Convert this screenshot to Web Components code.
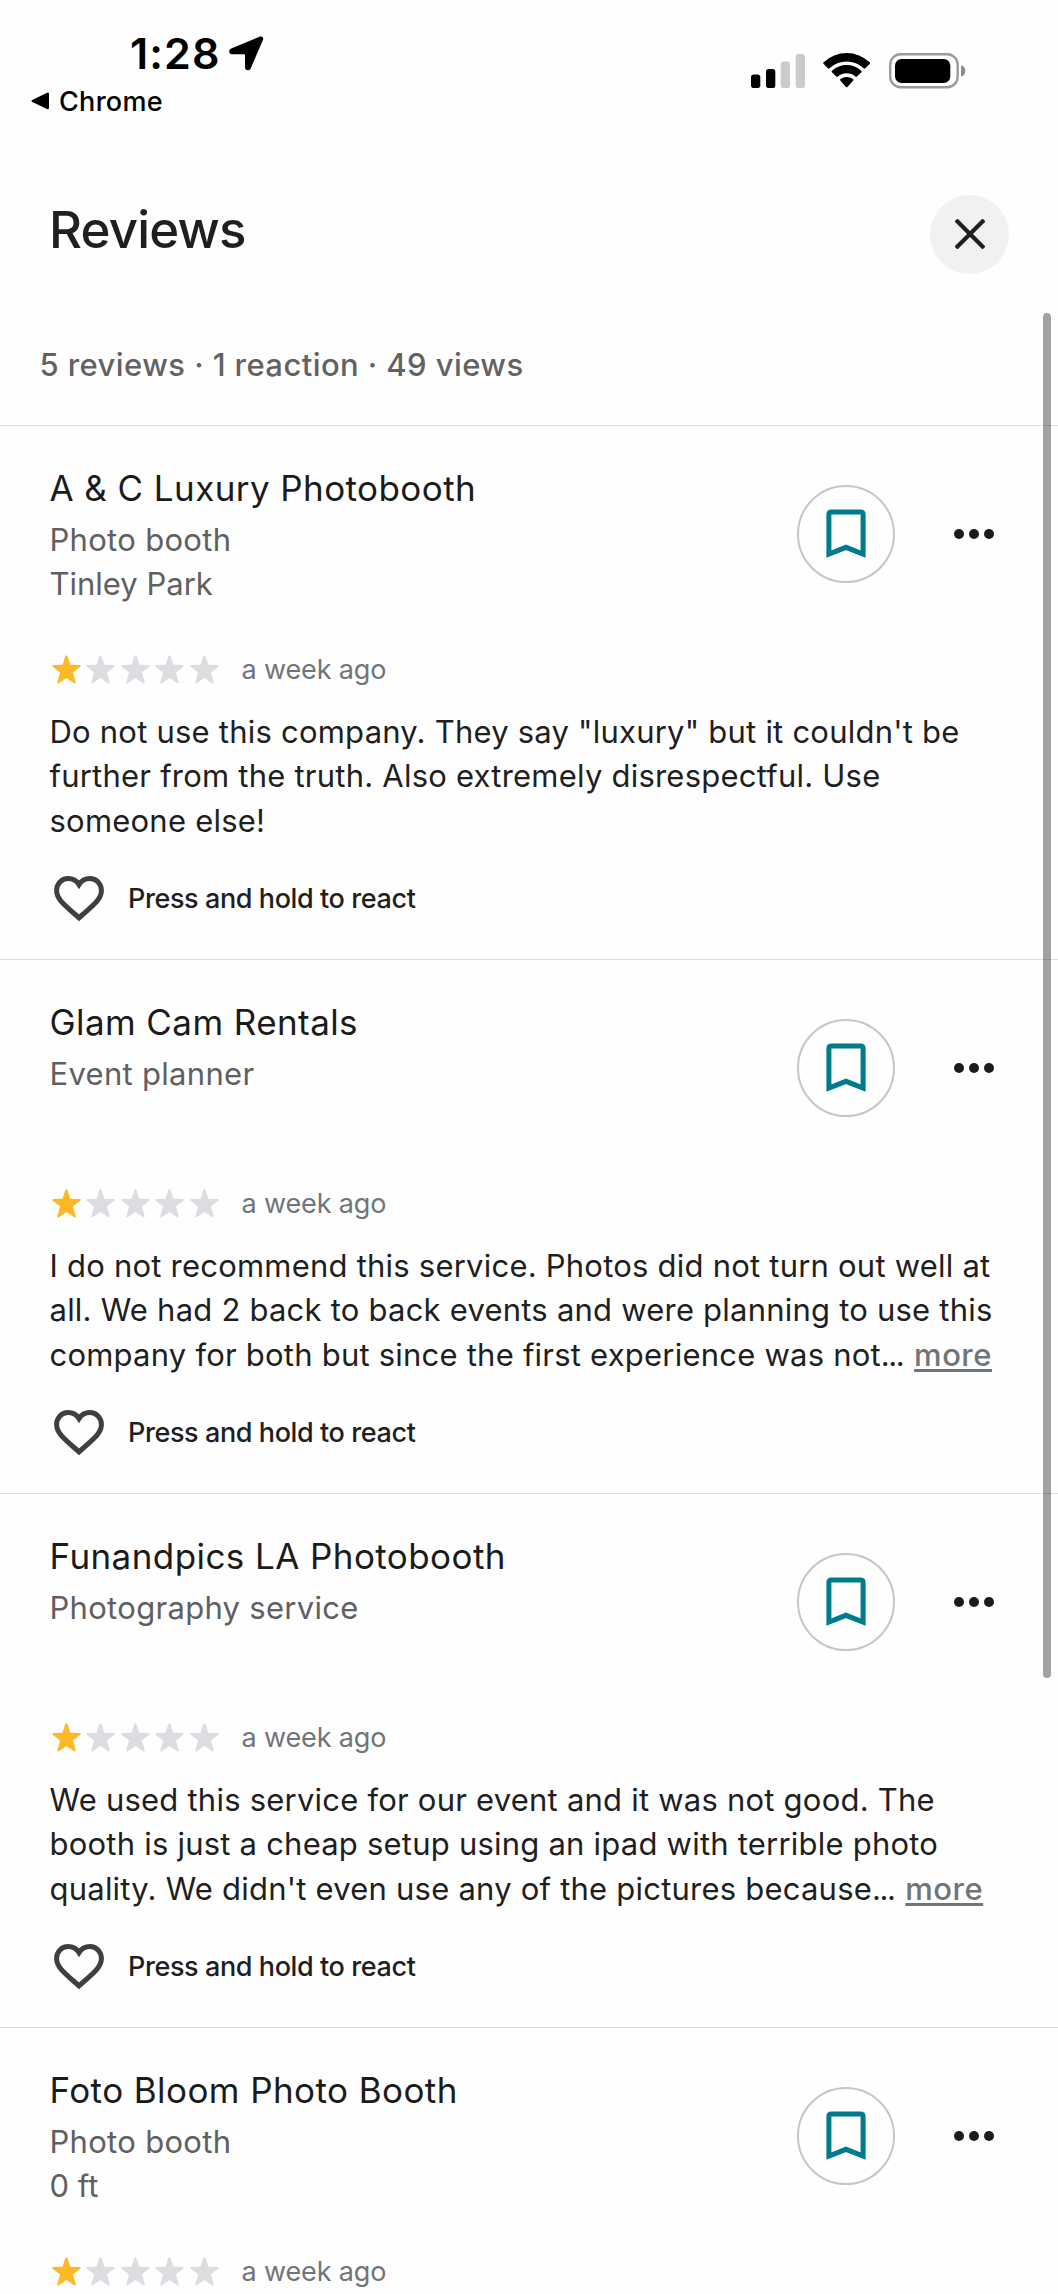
<!DOCTYPE html>
<html lang="en">
<head>
<meta charset="utf-8">
<title>Reviews</title>
<style>
  html, body { margin: 0; background: #fefefe; }
  body { width: 1058px; height: 2294px; overflow: hidden; font-family: Inter, "Noto Sans", sans-serif; color: #1f1f1f; }
  .dots { letter-spacing: -1.500px; }
</style>
</head>
<body>
<reviews-screen>
  <status-bar slot="status" time="1:28" back="Chrome"></status-bar>
  <sheet-header slot="header">Reviews</sheet-header>
  <review-summary slot="summary">5 reviews · 1 reaction · 49 views</review-summary>
  <review-card name="A &amp; C Luxury Photobooth" category="Photo booth" place="Tinley Park" when="a week ago" rating="1">Do not use this company. They say "luxury" but it couldn't be<br>further from the truth. Also extremely disrespectful. Use<br>someone else!</review-card>
  <review-card name="Glam Cam Rentals" category="Event planner" when="a week ago" rating="1">I do not recommend this service. Photos did not turn out well at<br>all. We had 2 back to back events and were planning to use this<br>company for both but since the first experience was not<span class="dots">...</span> <more-link>more</more-link></review-card>
  <review-card name="Funandpics LA Photobooth" category="Photography service" when="a week ago" rating="1">We used this service for our event and it was not good. The<br>booth is just a cheap setup using an ipad with terrible photo<br>quality. We didn't even use any of the pictures because<span class="dots">...</span> <more-link>more</more-link></review-card>
  <review-card name="Foto Bloom Photo Booth" category="Photo booth" place="0 ft" when="a week ago" rating="1"></review-card>
</reviews-screen>

<script>
const define = (name, html, setup) => {
  const template = document.createElement('template');
  template.innerHTML = html;
  customElements.define(name, class extends HTMLElement {
    connectedCallback() {
      if (this.shadowRoot) return;
      const root = this.attachShadow({ mode: 'open' });
      root.append(template.content.cloneNode(true));
      if (setup) setup(this, root);
    }
  });
};

define('reviews-screen', `
<style>
  :host { display: flex; flex-direction: column; position: relative; width: 1058px; height: 2294px; overflow: hidden; }
  .list { display: flex; flex-direction: column; flex: none; }
  .thumb { position: absolute; left: 1043px; top: 313px; width: 8px; height: 1365px; border-radius: 4px; background: rgba(0,0,0,.36); }
</style>
<slot name="status"></slot>
<slot name="header"></slot>
<slot name="summary"></slot>
<div class="list"><slot></slot></div>
<div class="thumb"></div>`);

define('status-bar', `
<style>
  :host { display: flex; flex: none; justify-content: space-between; height: 150px; color: #000; box-sizing: border-box; padding: 0 92px 0 31px; }
  .left { display: flex; flex-direction: column; }
  .clock { display: flex; align-items: center; gap: 8px; height: 52px; margin: 27px 0 0 99px; }
  .time { font-weight: 600; font-size: 43px; line-height: 52px; letter-spacing: 1.100px; }
  .back { display: flex; align-items: center; gap: 9px; height: 34px; margin-top: 5px; font-size: 27px; line-height: 34px; font-weight: 450; letter-spacing: .3px; }
  .app { padding-top: 2px; }
  .right { display: flex; align-items: flex-start; padding-top: 52px; }
  svg { display: block; flex: none; }
</style>
<div class="left">
  <div class="clock"><span class="time"></span>
    <svg width="35" height="35" viewBox="0 0 35 35"><path d="M30.500 .8 2.200 12.600C-.8 13.900-.3 18.300 3 18.300H15.200Q16 18.300 16 19.100V31.200C16 34.700 20.500 35.300 21.800 32.200L33.900 4C35 1.500 33 -.2 30.500 .8Z"/></svg>
  </div>
  <div class="back"><svg width="19" height="18" viewBox="0 0 19 18"><path d="M1.300 7.900 16 .7Q18 0 18 2V15.800Q18 17.800 16 17L1.300 10Q-.5 9 1.300 7.900Z"/></svg><span class="app"></span></div>
</div>
<div class="right">
  <svg width="215" height="38" viewBox="0 0 215 38">
    <rect x="0" y="22.500" width="9.300" height="13.500" rx="2.800"/>
    <rect x="15" y="17" width="9.300" height="19" rx="2.800"/>
    <rect x="29.700" y="9.500" width="9.300" height="26.500" rx="2.800" fill="#cbcbcb"/>
    <rect x="44.700" y="2" width="9.300" height="34" rx="2.800" fill="#cbcbcb"/>
    <path d="M72.500 11.800 76.800 16.300Q77.600 17 78.400 16.300A25 25 0 0 1 112.800 16.300Q113.600 17 114.400 16.300L118.800 11.800Q119.500 11 118.700 10.300A33.500 33.500 0 0 0 72.600 10.300Q71.800 11 72.500 11.800Z"/>
    <path d="M80.900 20.200 85.300 24.500Q86 25.200 86.900 24.500A13.500 13.500 0 0 1 104.400 24.500Q105.300 25.200 106 24.500L110.400 20.200Q111.200 19.400 110.300 18.700A22 22 0 0 0 81 18.700Q80.100 19.400 80.900 20.200Z"/>
    <path d="M89.300 28.400 95 34.900Q95.700 35.700 96.400 34.900L102.300 28.400Q103 27.600 102.100 27A10.500 10.500 0 0 0 89.500 27Q88.600 27.600 89.300 28.400Z"/>
    <rect x="139.200" y="2.200" width="67.500" height="33" rx="10.500" fill="none" stroke="#9b9b9b" stroke-width="2.400"/>
    <rect x="144" y="7" width="55.300" height="24" rx="6.500"/>
    <path d="M210 13.300Q214.300 14.500 214.300 19T210 24.500Z" fill="#8c8c8c"/>
  </svg>
</div>`, (host, root) => {
  root.querySelector('.time').textContent = host.getAttribute('time');
  root.querySelector('.app').textContent = host.getAttribute('back');
});

define('sheet-header', `
<style>
  :host { display: flex; flex: none; justify-content: space-between; align-items: center; height: 168px; box-sizing: border-box; padding: 0 49px; }
  h1 { margin: 0 0 9px; font-size: 51px; line-height: 64px; font-weight: 500; letter-spacing: -.8px; }
  button { display: grid; place-items: center; width: 79px; height: 79px; padding: 0; border: 0; border-radius: 50%; background: #f1f1f1; }
</style>
<h1><slot></slot></h1>
<button aria-label="Close"><svg width="30" height="30" viewBox="0 0 30 30"><path d="M1 1 29 29M29 1 1 29" stroke="#1f1f1f" stroke-width="4.200"/></svg></button>`);

define('review-summary', `
<style>
  :host { display: flex; flex: none; align-items: center; height: 107px; box-sizing: border-box; padding: 0 0 13px 39.500px; font-size: 31px; line-height: 40px; font-weight: 500; letter-spacing: .42px; color: #626262; }
</style>
<slot></slot>`);

define('star-rating', `
<style>
  :host { display: flex; gap: 5.400px; }
  svg { display: block; fill: #dcdde1; }
  svg.on { fill: #fdb827; }
</style>`, (host, root) => {
  const rating = Number(host.getAttribute('value'));
  for (let i = 0; i < 5; i++) {
    root.innerHTML += `<svg class="${i < rating ? 'on' : ''}" width="29" height="29" viewBox="0 0 29 29"><path d="M13.300 1Q14.500-.7 15.500 1.200L18.400 9.700 27.500 10Q29.500 10.500 28 12L20.900 17.500 23.700 27Q24 29 22.200 28.200L14.500 23 6.800 28.200Q5 29 5.300 27L8.100 17.500 1 12Q-.5 10.500 1.500 10L10.600 9.700Z"/></svg>`;
  }
});

define('more-link', `
<style>
  :host { display: inline; margin-left: 2px; color: #70757a; font-weight: 500; letter-spacing: .5px; text-decoration: underline; text-decoration-thickness: 2.500px; text-underline-offset: 3px; text-decoration-skip-ink: none; }
</style>
<slot></slot>`);

define('review-card', `
<style>
  :host { display: flex; flex: none; flex-direction: column; height: 534px; box-sizing: border-box; border-top: 1px solid #dedede; padding: 37px 0 0 49.500px; overflow: hidden; }
  header { display: flex; height: 180px; flex: none; }
  .who { flex: 1; white-space: nowrap; }
  h2 { margin: 0 0 5px; font-size: 35px; line-height: 50px; font-weight: 400; letter-spacing: .42px; color: #1b1b1b; }
  .sub { font-size: 31px; line-height: 44.330px; color: #606060; }
  .category { letter-spacing: .3px; }
  .save { display: grid; place-items: center; width: 98px; height: 98px; box-sizing: border-box; border: 2px solid #c6c6c6; border-radius: 50%; margin: 22px 0 0; }
  .dots { display: flex; gap: 4.700px; margin: 66px 64.300px 0 59.300px; }
  .dots i { width: 10px; height: 10px; border-radius: 50%; background: #1b1b1b; }
  .rating { display: flex; align-items: center; height: 52px; flex: none; gap: 23px; padding-left: 2.500px; font-size: 27px; line-height: 34px; letter-spacing: -.15px; color: #70757a; }
  .when { padding-top: 2px; }
  p { margin: 15px 0 0; height: 133px; flex: none; font-size: 31px; line-height: 44.330px; letter-spacing: .22px; color: #1f1f1f; white-space: nowrap; }
  .react { display: flex; align-items: center; gap: 24.500px; height: 60px; flex: none; margin-top: 26px; padding-left: 4px; font-size: 27px; line-height: 34px; font-weight: 500; letter-spacing: -.4px; }
  svg { display: block; }
</style>
<header>
  <div class="who"><h2></h2><div class="sub category"></div><div class="sub place"></div></div>
  <div class="save"><svg width="40" height="50" viewBox="0 0 40 50"><path d="M2.900 45V5.500Q2.900 2.900 5.500 2.900H34.500Q37.100 2.900 37.100 5.500V45L20 38.300Z" fill="none" stroke="#007b8a" stroke-width="5"/></svg></div>
  <div class="dots"><i></i><i></i><i></i></div>
</header>
<div class="rating"><span class="when"></span></div>
<p><slot></slot></p>
<div class="react"><svg width="50" height="46" viewBox="0 0 50 46"><path d="M25 41.800C11 29.500 2.600 23.500 2.600 14.500 2.600 7.500 7.800 2.600 14 2.600 18.500 2.600 22.700 4.900 25 8.600 27.300 4.900 31.500 2.600 36 2.600 42.200 2.600 47.400 7.500 47.400 14.500 47.400 23.500 39 29.500 25 41.800Z" fill="none" stroke="#3c4043" stroke-width="5"/></svg><span>Press and hold to react</span></div>`, (host, root) => {
  root.querySelector('h2').textContent = host.getAttribute('name');
  root.querySelector('.category').textContent = host.getAttribute('category');
  root.querySelector('.place').textContent = host.getAttribute('place') || '';
  root.querySelector('.when').textContent = host.getAttribute('when');
  const stars = document.createElement('star-rating');
  stars.setAttribute('value', host.getAttribute('rating'));
  root.querySelector('.rating').prepend(stars);
  // A rating without a written review has no body and nothing to react to.
  if (!host.textContent.trim()) {
    root.querySelector('p').remove();
    root.querySelector('.react').remove();
  }
});
</script>
</body>
</html>
